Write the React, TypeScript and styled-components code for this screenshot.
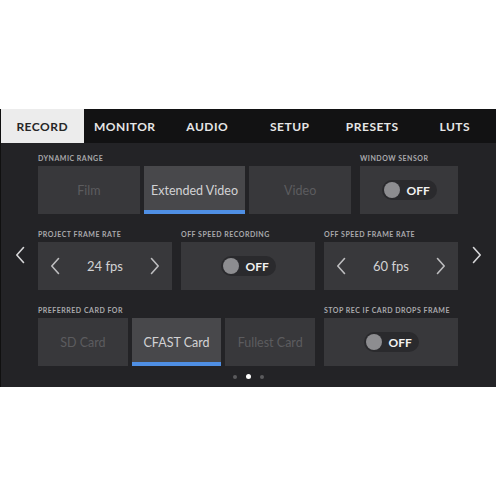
import React from 'react';
import styled, { createGlobalStyle } from 'styled-components';

const GlobalStyle = createGlobalStyle`
  body {
    margin: 0;
    background: #ffffff;
    font-family: Lato, "Open Sans", sans-serif;
  }
`;

const TABS = ['RECORD', 'MONITOR', 'AUDIO', 'SETUP', 'PRESETS', 'LUTS'];

const Chevron: React.FC<{ dir: 'left' | 'right'; color?: string }> = ({ dir, color = '#bdbdbf' }) => (
  <svg width="10" height="18" viewBox="0 0 10 18" fill="none">
    <path
      d={dir === 'left' ? 'M8.5 1.5 L1.8 9 L8.5 16.5' : 'M1.5 1.5 L8.2 9 L1.5 16.5'}
      stroke={color}
      strokeWidth="1.6"
      strokeLinecap="round"
      strokeLinejoin="round"
    />
  </svg>
);

const Toggle: React.FC = () => (
  <Pill>
    <Knob />
    <PillText>OFF</PillText>
  </Pill>
);

interface SegmentsProps {
  items: string[];
  active: number;
}

const Segments: React.FC<SegmentsProps> = ({ items, active }) => (
  <SegmentGroup $count={items.length}>
    {items.map((item, i) => (
      <Segment key={item} $active={i === active}>
        {item}
      </Segment>
    ))}
  </SegmentGroup>
);

const Stepper: React.FC<{ value: string }> = ({ value }) => (
  <StepperCard>
    <Chevron dir="left" />
    <StepperValue>{value}</StepperValue>
    <Chevron dir="right" />
  </StepperCard>
);

export default function App() {
  return (
    <>
      <GlobalStyle />
      <Panel>
        <TabBar>
          {TABS.map((tab, i) => (
            <Tab key={tab} $active={i === 0}>
              {tab}
            </Tab>
          ))}
        </TabBar>
        <Body>
          <SideArrow>
            <Chevron dir="left" color="#d6d6d8" />
          </SideArrow>
          <Content>
            <Row $columns="313px 98px">
              <Field>
                <Label>DYNAMIC RANGE</Label>
                <Segments items={['Film', 'Extended Video', 'Video']} active={1} />
              </Field>
              <Field>
                <Label>WINDOW SENSOR</Label>
                <Card>
                  <Toggle />
                </Card>
              </Field>
            </Row>
            <Row $columns="1fr 1fr 1fr">
              <Field>
                <Label>PROJECT FRAME RATE</Label>
                <Stepper value="24 fps" />
              </Field>
              <Field>
                <Label>OFF SPEED RECORDING</Label>
                <Card>
                  <Toggle />
                </Card>
              </Field>
              <Field>
                <Label>OFF SPEED FRAME RATE</Label>
                <Stepper value="60 fps" />
              </Field>
            </Row>
            <Row $columns="277px 134px">
              <Field>
                <Label>PREFERRED CARD FOR</Label>
                <Segments items={['SD Card', 'CFAST Card', 'Fullest Card']} active={1} />
              </Field>
              <Field>
                <Label>STOP REC IF CARD DROPS FRAME</Label>
                <Card>
                  <Toggle />
                </Card>
              </Field>
            </Row>
            <Dots>
              <Dot />
              <Dot $active />
              <Dot />
            </Dots>
          </Content>
          <SideArrow>
            <Chevron dir="right" color="#d6d6d8" />
          </SideArrow>
        </Body>
      </Panel>
    </>
  );
}

const Panel = styled.div`
  margin-top: 109px;
  width: 496px;
  background: #232326;
  border-left: 1px solid #101010;
  box-sizing: border-box;
`;

const TabBar = styled.div`
  display: grid;
  grid-template-columns: repeat(6, 1fr);
  height: 34px;
  background: #121213;
`;

const Tab = styled.div<{ $active?: boolean }>`
  display: flex;
  align-items: center;
  justify-content: center;
  font-size: 12px;
  font-weight: 700;
  letter-spacing: 0.5px;
  color: ${({ $active }) => ($active ? '#262626' : '#e6e6e6')};
  background: ${({ $active }) => ($active ? '#ececec' : 'transparent')};
`;

const Body = styled.div`
  display: grid;
  grid-template-columns: 37px 420px 38px;
  padding: 10px 0 8px;
`;

const SideArrow = styled.div`
  display: flex;
  align-items: center;
  justify-content: center;
  padding-bottom: 22px;
`;

const Content = styled.div`
  display: flex;
  flex-direction: column;
  gap: 15px;
`;

const Row = styled.div<{ $columns: string }>`
  display: grid;
  grid-template-columns: ${({ $columns }) => $columns};
  column-gap: 9px;
`;

const Field = styled.div`
  display: flex;
  flex-direction: column;
  min-width: 0;
`;

const Label = styled.div`
  height: 10px;
  margin-bottom: 3px;
  font-size: 7px;
  line-height: 10px;
  font-weight: 700;
  letter-spacing: 0.5px;
  color: #a9a9ac;
  white-space: nowrap;
`;

const Card = styled.div`
  height: 48px;
  background: #38383b;
  display: flex;
  align-items: center;
  justify-content: center;
`;

const SegmentGroup = styled.div<{ $count: number }>`
  display: grid;
  grid-template-columns: repeat(${({ $count }) => $count}, 1fr);
  gap: 4px;
  height: 48px;
`;

const Segment = styled.div<{ $active?: boolean }>`
  display: flex;
  align-items: center;
  justify-content: center;
  font-size: 12.5px;
  white-space: nowrap;
  overflow: hidden;
  color: ${({ $active }) => ($active ? '#d2d2d4' : '#5c5c5f')};
  background: ${({ $active }) => ($active ? '#48484b' : '#38383b')};
  box-shadow: ${({ $active }) => ($active ? 'inset 0 -4px 0 #4f8fe4' : 'none')};
`;

const StepperCard = styled(Card)`
  justify-content: space-between;
  padding: 0 12px;
`;

const StepperValue = styled.span`
  font-size: 13px;
  color: #d2d2d4;
`;

const Pill = styled.div`
  display: flex;
  align-items: center;
  gap: 7px;
  width: 55px;
  height: 20px;
  padding: 0 2px;
  box-sizing: border-box;
  border-radius: 10px;
  background: #2a2a2d;
`;

const Knob = styled.div`
  width: 16px;
  height: 16px;
  border-radius: 50%;
  background: #8d8d90;
`;

const PillText = styled.span`
  font-size: 12px;
  font-weight: 700;
  color: #f2f2f2;
`;

const Dots = styled.div`
  display: flex;
  justify-content: center;
  align-items: center;
  gap: 9px;
  height: 5px;
  margin-top: -7px;
`;

const Dot = styled.div<{ $active?: boolean }>`
  width: ${({ $active }) => ($active ? '5px' : '4px')};
  height: ${({ $active }) => ($active ? '5px' : '4px')};
  border-radius: 50%;
  background: ${({ $active }) => ($active ? '#ffffff' : '#5a5a5d')};
`;
